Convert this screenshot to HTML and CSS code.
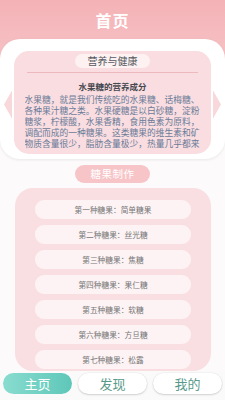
FILE: index.html
```html
<!DOCTYPE html>
<html lang="zh">
<head>
<meta charset="utf-8">
<link rel="stylesheet" href="styles.css">
</head>
<body>
<div class="screen">
  <main class="main">
    <header class="header"><h1 class="title">首页</h1></header>
    <section class="card">
      <span class="arrow arrow-left"></span>
      <div class="inner">
        <div class="pill-light">营养与健康</div>
        <div class="rule"></div>
        <h2 class="subtitle">水果糖的营养成分</h2>
        <p class="para">水果糖，就是我们传统吃的水果糖、话梅糖、各种果汁糖之类。水果硬糖是以白砂糖，淀粉糖浆，柠檬酸，水果香精，食用色素为原料，调配而成的一种糖果。这类糖果的维生素和矿物质含量很少，脂肪含量极少，热量几乎都来自于糖。</p>
      </div>
      <span class="arrow arrow-right"></span>
    </section>
    <div class="pill-pink">糖果制作</div>
    <section class="list">
      <div class="item">第一种糖果：简单糖果</div>
      <div class="item">第二种糖果：丝光糖</div>
      <div class="item">第三种糖果：焦糖</div>
      <div class="item">第四种糖果：果仁糖</div>
      <div class="item">第五种糖果：软糖</div>
      <div class="item">第六种糖果：方旦糖</div>
      <div class="item">第七种糖果：松露</div>
    </section>
  </main>
  <nav class="nav">
    <div class="tab tab-active">主页</div>
    <div class="tab">发现</div>
    <div class="tab">我的</div>
  </nav>
</div>
</body>
</html>
```
FILE: styles.css
```css
* { box-sizing: border-box; margin: 0; padding: 0; }
html, body { width: 225px; height: 400px; overflow: hidden; }
body {
  font-family: "Noto Sans CJK SC", "Noto Sans", sans-serif;
  background: #fcfafa;
}
.screen { display: flex; flex-direction: column; height: 400px; }
.main { height: 371px; overflow: hidden; display: flex; flex-direction: column; align-items: center; }
.header {
  width: 100%;
  height: 62px;
  background: linear-gradient(180deg, #f4b2b6 0%, #f6c2c5 100%);
  display: flex;
  justify-content: center;
  padding-top: 9px;
}
.title { color: #fff; font-size: 16px; font-weight: 700; line-height: 22px; letter-spacing: 1px; }
.card {
  width: 225px;
  margin-top: -20px;
  background: #fff;
  border-radius: 20px;
  box-shadow: 0 1px 3px rgba(0,0,0,0.08);
  padding: 12px 4px 5px 4px;
  display: flex;
  align-items: center;
  gap: 2px;
}
.arrow { width: 8px; height: 28px; flex: none; background: #f8d8db; }
.arrow-left { clip-path: polygon(0 50%, 100% 0, 100% 100%); margin-top: 4px; }
.arrow-right { clip-path: polygon(0 0, 100% 50%, 0 100%); margin-top: 4px; }
.inner {
  flex: 1;
  height: 103px;
  overflow: hidden;
  background: #f9dde0;
  border-radius: 15px;
  display: flex;
  flex-direction: column;
  align-items: center;
  padding: 3px 10px 0 10px;
}
.pill-light {
  flex: none;
  width: 75px; height: 14px; border-radius: 7px;
  background: #fdf1f2; color: #555a60;
  font-size: 10px; line-height: 14px; text-align: center;
}
.rule { flex: none; width: 171px; height: 1px; background: #ecb9be; margin-top: 4px; }
.subtitle { flex: none; font-size: 8.5px; font-weight: 700; color: #474a50; line-height: 12px; margin-top: 7px; }
.para {
  flex: none;
  font-size: 8.75px; line-height: 11px; color: #6a7b98;
  width: 176px; margin-top: 2px;
  height: 55px; overflow: hidden;
}
.pill-pink {
  flex: none;
  margin-top: 6px;
  width: 75px; height: 18px; border-radius: 9px;
  background: #f7c5c8; color: #fff;
  font-size: 10.5px; line-height: 18px; text-align: center; letter-spacing: 0.5px;
}
.list {
  flex: none;
  margin-top: 5px;
  width: 196px;
  margin-left: 1px;
  background: #f9dfe2;
  border-radius: 18px;
  padding: 12px 0 2px;
  display: flex; flex-direction: column; align-items: center; gap: 6px;
}
.item {
  flex: none;
  width: 156px; height: 19px; border-radius: 9px;
  background: #fdf3f4; color: #767676;
  font-size: 7.7px; line-height: 19px; text-align: center;
}
.nav {
  flex: 1;
  display: flex; gap: 6px; padding: 2px 3px 0;
  background: #fbfafa;
}
.tab {
  width: 69px; height: 21px; border-radius: 11px;
  background: #fff; color: #5a9a8b;
  box-shadow: 0 1px 2px rgba(0,0,0,0.15), 0 0 0 0.5px rgba(0,0,0,0.05);
  font-size: 13px; line-height: 21px; text-align: center;
}
.tab-active { background: linear-gradient(90deg, #88dccf 0%, #5ec7b9 100%); color: #fff; box-shadow: none; }
```
